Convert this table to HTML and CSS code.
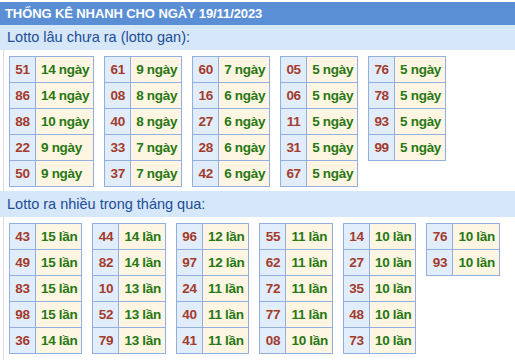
FILE: index.html
```html
<!DOCTYPE html>
<html lang="vi">
<head>
<meta charset="utf-8">
<link rel="stylesheet" href="styles.css">
</head>
<body>
<div class="box">
  <div class="title">THỐNG KÊ NHANH CHO NGÀY 19/11/2023</div>
  <div class="band">Lotto lâu chưa ra (lotto gan):</div>
  <div class="content">
    <table class="t"><tr><td class="n">51</td><td class="v">14 ngày</td></tr><tr><td class="n">86</td><td class="v">14 ngày</td></tr><tr><td class="n">88</td><td class="v">10 ngày</td></tr><tr><td class="n">22</td><td class="v">9 ngày</td></tr><tr><td class="n">50</td><td class="v">9 ngày</td></tr></table>
    <table class="t"><tr><td class="n">61</td><td class="v">9 ngày</td></tr><tr><td class="n">08</td><td class="v">8 ngày</td></tr><tr><td class="n">40</td><td class="v">8 ngày</td></tr><tr><td class="n">33</td><td class="v">7 ngày</td></tr><tr><td class="n">37</td><td class="v">7 ngày</td></tr></table>
    <table class="t"><tr><td class="n">60</td><td class="v">7 ngày</td></tr><tr><td class="n">16</td><td class="v">6 ngày</td></tr><tr><td class="n">27</td><td class="v">6 ngày</td></tr><tr><td class="n">28</td><td class="v">6 ngày</td></tr><tr><td class="n">42</td><td class="v">6 ngày</td></tr></table>
    <table class="t"><tr><td class="n">05</td><td class="v">5 ngày</td></tr><tr><td class="n">06</td><td class="v">5 ngày</td></tr><tr><td class="n">11</td><td class="v">5 ngày</td></tr><tr><td class="n">31</td><td class="v">5 ngày</td></tr><tr><td class="n">67</td><td class="v">5 ngày</td></tr></table>
    <table class="t"><tr><td class="n">76</td><td class="v">5 ngày</td></tr><tr><td class="n">78</td><td class="v">5 ngày</td></tr><tr><td class="n">93</td><td class="v">5 ngày</td></tr><tr><td class="n">99</td><td class="v">5 ngày</td></tr></table>
  </div>
  <div class="band">Lotto ra nhiều trong tháng qua:</div>
  <div class="content">
    <table class="t"><tr><td class="n">43</td><td class="v">15 lần</td></tr><tr><td class="n">49</td><td class="v">15 lần</td></tr><tr><td class="n">83</td><td class="v">15 lần</td></tr><tr><td class="n">98</td><td class="v">15 lần</td></tr><tr><td class="n">36</td><td class="v">14 lần</td></tr></table>
    <table class="t"><tr><td class="n">44</td><td class="v">14 lần</td></tr><tr><td class="n">82</td><td class="v">14 lần</td></tr><tr><td class="n">10</td><td class="v">13 lần</td></tr><tr><td class="n">52</td><td class="v">13 lần</td></tr><tr><td class="n">79</td><td class="v">13 lần</td></tr></table>
    <table class="t"><tr><td class="n">96</td><td class="v">12 lần</td></tr><tr><td class="n">97</td><td class="v">12 lần</td></tr><tr><td class="n">24</td><td class="v">11 lần</td></tr><tr><td class="n">40</td><td class="v">11 lần</td></tr><tr><td class="n">41</td><td class="v">11 lần</td></tr></table>
    <table class="t"><tr><td class="n">55</td><td class="v">11 lần</td></tr><tr><td class="n">62</td><td class="v">11 lần</td></tr><tr><td class="n">72</td><td class="v">11 lần</td></tr><tr><td class="n">77</td><td class="v">11 lần</td></tr><tr><td class="n">08</td><td class="v">10 lần</td></tr></table>
    <table class="t"><tr><td class="n">14</td><td class="v">10 lần</td></tr><tr><td class="n">27</td><td class="v">10 lần</td></tr><tr><td class="n">35</td><td class="v">10 lần</td></tr><tr><td class="n">48</td><td class="v">10 lần</td></tr><tr><td class="n">73</td><td class="v">10 lần</td></tr></table>
    <table class="t"><tr><td class="n">76</td><td class="v">10 lần</td></tr><tr><td class="n">93</td><td class="v">10 lần</td></tr></table>
  </div>
</div>
</body>
</html>
```

FILE: styles.css
```css
html, body {
  margin: 0;
  padding: 0;
  background: #ffffff;
}
body {
  font-family: "Liberation Sans", Arial, sans-serif;
  font-size: 13px;
  padding-top: 2px;
}
.box {
  width: 540px;
}
.title {
  background: #5b8fd5;
  color: #ffffff;
  font-weight: bold;
  font-size: 13px;
  height: 23px;
  line-height: 23px;
  padding-left: 5px;
  letter-spacing: -0.1px;
}
.band {
  background: #d6e7fa;
  color: #1c4d95;
  font-size: 14.5px;
  height: 25px;
  line-height: 25px;
  padding-left: 7px;
}
.content {
  margin-left: 3px;
  border-left: 1px solid #dcdcdc;
  padding: 6px 0 4px 5px;
  display: flex;
  align-items: flex-start;
  gap: 10px;
}
.content + .band {
  height: 26px;
  line-height: 26px;
}
.content:last-child {
  padding-bottom: 6px;
}
.t {
  border-collapse: collapse;
  border: 1px solid #93afdf;
}
.t td {
  border: 1px solid #93afdf;
  height: 25px;
  padding: 0;
  font-size: 13.5px;
  font-weight: bold;
  letter-spacing: -0.3px;
  white-space: nowrap;
}
.t td.n {
  background: #e2edfc;
  color: #a33b2c;
  padding: 0 5px;
  width: 15px;
  text-align: center;
}
.t td.v {
  background: #fff5e3;
  color: #267812;
  padding: 0 4px 0 5px;
}
```
